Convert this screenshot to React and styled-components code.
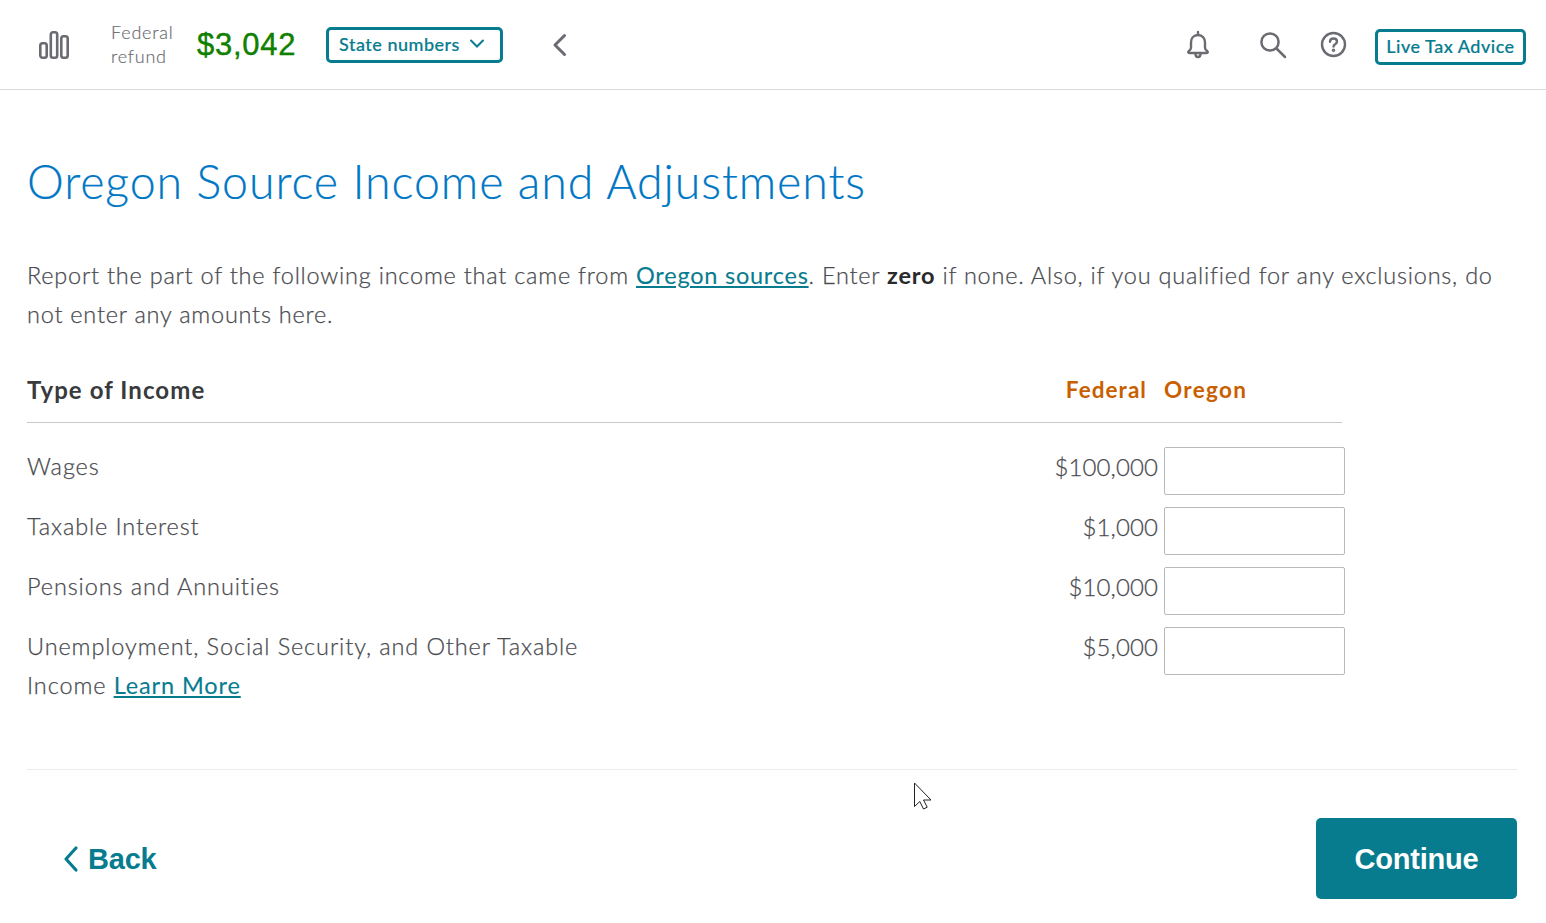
import React from "react";
import styled, { createGlobalStyle } from "styled-components";

const Global = createGlobalStyle`
  html, body { margin: 0; padding: 0; background: #fff; }
  body { font-family: Lato, "Open Sans", sans-serif; color: #393a3d; }
`;
const Page = styled.div`
  width: 1546px; height: 923px; position: relative; overflow: hidden; background: #fff;
  display: flex; flex-direction: column;
`;
const Header = styled.header`
  height: 89px; border-bottom: 1px solid #d9d9d9; display: flex; align-items: center; flex: none;
`;
const IconSlot = styled.span`
  display: flex; align-items: center; justify-content: center; width: ${p => p.$w}px; margin-left: ${p => p.$ml || 0}px; color: #6b6c72;
`;
const RefundLabel = styled.div`
  width: 86px; margin: -2px 0 0 41px; font-size: 18px; line-height: 24px; color: #6b6c72; letter-spacing: .8px; font-weight: 300;
  -webkit-text-stroke: .2px #6b6c72;
`;
const RefundAmount = styled.div`
  font-family: "Liberation Sans", Arial, sans-serif; font-size: 31px; letter-spacing: .75px; color: #108000; width: 129px;
  -webkit-text-stroke: .4px #108000;
`;
const OutlineButton = styled.button`
  box-sizing: border-box; background: #fff; border: 3px solid #077c8f; border-radius: 5px; color: #077c8f;
  font: 500 18px Lato, sans-serif; display: flex; align-items: center; justify-content: center;
  padding: 0 ${p => p.$pr || 0}px ${p => p.$pb || 2}px 0; gap: 9px;
  width: ${p => p.$w}px; height: 36px; margin-left: ${p => p.$ml || 0}px; margin-right: ${p => p.$mr || 0}px; margin-top: ${p => p.$mt || 0}px; letter-spacing: .5px;
  -webkit-text-stroke: .2px #077c8f;
`;
const Spacer = styled.div`flex: 1;`;
const Main = styled.main`
  flex: 1; padding: 0 29px 0 27px; display: flex; flex-direction: column;
`;
const Title = styled.h1`
  margin: 61px 0 0; font-weight: 300; font-size: 46.5px; line-height: 60px; color: #0077c5; letter-spacing: .9px;
  -webkit-text-stroke: .2px #0077c5;
`;
const Intro = styled.p`
  margin: 45px 0 0; font-size: 23.5px; line-height: 39px; color: #4a4b50; letter-spacing: .77px; font-weight: 300;
  -webkit-text-stroke: .25px #4a4b50;
  b { color: #28292c; font-weight: 700; -webkit-text-stroke: 0; }
`;
const TextLink = styled.a`
  color: #077c8f; text-decoration: underline; font-weight: 400; -webkit-text-stroke: .1px #077c8f;
`;
const Table = styled.div`width: 1318px; margin-top: 22px;`;
const HeadRow = styled.div`
  display: grid; grid-template-columns: 1fr 120px 178px; column-gap: 17px; height: 66px; align-items: center; width: 1315px;
  border-bottom: 1px solid #c9c9c9; margin-bottom: 24px;
`;
const HeadLabel = styled.div`font-weight: 700; font-size: 24px; color: #393a3d; letter-spacing: 1.07px;`;
const HeadCol = styled.div`
  font-weight: 700; font-size: 22.5px; color: #c96000; text-align: ${p => p.$right ? "right" : "left"}; letter-spacing: ${p => p.$right ? 1.05 : 1.3}px;
`;
const Row = styled.div`
  display: grid; grid-template-columns: 1fr 181px; column-gap: 6px; margin-bottom: 12px; align-items: start;
`;
const RowLabelCell = styled.div`
  display: grid; grid-template-columns: 580px 1fr; font-size: 23.5px; line-height: 39px; letter-spacing: .89px; color: #4a4b50; font-weight: 300;
  -webkit-text-stroke: .25px #4a4b50;
`;
const Amount = styled.div`text-align: right; font-size: 24px; letter-spacing: .1px;`;
const Field = styled.input`
  box-sizing: border-box; width: 181px; height: 48px; border: 1px solid #bababa; border-radius: 2px; background: #fff; display: block;
`;
const Footer = styled.footer`
  position: absolute; left: 27px; right: 29px; top: 769px; border-top: 1px solid #ececec;
  display: flex; justify-content: space-between; align-items: flex-start; padding-top: 48px;
`;
const BackLink = styled.a`
  display: flex; align-items: center; gap: 8px; margin: 0 0 0 35px; height: 81px; padding-top: 1px; box-sizing: border-box;
  font: 700 29px "Liberation Sans", Arial, sans-serif; color: #077c8f; letter-spacing: -.2px;
`;
const Continue = styled.button`
  width: 201px; height: 81px; border: 0; padding: 1px 0 0; border-radius: 5px; background: #077c8f; color: #fff;
  font: 700 29px "Liberation Sans", Arial, sans-serif; letter-spacing: -.2px;
`;
const Cursor = styled.svg`position: absolute; left: 913px; top: 782px;`;

const rows = [
  ["Wages", "$100,000"],
  ["Taxable Interest", "$1,000"],
  ["Pensions and Annuities", "$10,000"],
  [<>Unemployment, Social Security, and Other Taxable Income <TextLink>Learn More</TextLink></>, "$5,000"],
];

export default function App() {
  return (
    <Page>
      <Global />
      <Header>
        <IconSlot $w={32} $ml={38}>
          <svg width="32" height="30" viewBox="0 0 32 30" fill="none" stroke="currentColor" strokeWidth="2.6">
            <rect x="2.3" y="13.3" width="6.4" height="14.4" rx="2.2" />
            <rect x="12.8" y="2.3" width="6.4" height="25.4" rx="2.2" />
            <rect x="23.3" y="6.3" width="6.4" height="21.4" rx="2.2" />
          </svg>
        </IconSlot>
        <RefundLabel>Federal<br />refund</RefundLabel>
        <RefundAmount>$3,042</RefundAmount>
        <OutlineButton $w={177} $pr={5}>
          State numbers
          <svg width="16" height="10" viewBox="0 0 16 10" fill="none" stroke="currentColor" strokeWidth="2" strokeLinecap="round"><path d="M2 1.5l6 6 6-6" /></svg>
        </OutlineButton>
        <IconSlot $w={18} $ml={48}>
          <svg width="16" height="26" viewBox="0 0 16 26" fill="none" stroke="currentColor" strokeWidth="3" strokeLinecap="round" strokeLinejoin="round"><path d="M12.5 3.5L3 13l9.5 9.5" /></svg>
        </IconSlot>
        <Spacer />
        <IconSlot $w={28}>
          <svg width="26" height="30" viewBox="0 0 26 30" fill="none" stroke="currentColor" strokeWidth="2.4" strokeLinecap="round" strokeLinejoin="round">
            <path d="M13 5c-4.6 0-7 3.4-7 7.5v5.2c0 1.5-1.1 2.6-2.4 3.6-.8.7-.4 1.7.6 1.7h17.6c1 0 1.4-1 .6-1.7-1.3-1-2.4-2.1-2.4-3.6v-5.2C20 8.400 17.600 5 13 5z" />
            <path d="M13 2v3M10.500 24c0 1.800 1.100 3 2.500 3s2.500-1.200 2.500-3" />
          </svg>
        </IconSlot>
        <IconSlot $w={28} $ml={47}>
          <svg width="28" height="28" viewBox="0 0 28 28" fill="none" stroke="currentColor" strokeWidth="2.5" strokeLinecap="round"><circle cx="11" cy="11" r="8.600" /><path d="M17.500 17.500L26 26" /></svg>
        </IconSlot>
        <IconSlot $w={28} $ml={32}>
          <svg width="27" height="27" viewBox="0 0 27 27" fill="none" stroke="currentColor" strokeWidth="2.4" strokeLinecap="round">
            <circle cx="13.500" cy="13.500" r="11.500" />
            <path d="M10 10.800c0-2 1.500-3.300 3.500-3.300s3.500 1.300 3.500 3.100c0 2.700-3.500 2.500-3.500 5" />
            <circle cx="13.500" cy="19.300" r=".6" fill="currentColor" />
          </svg>
        </IconSlot>
        <OutlineButton $w={151} $ml={28} $mt={5} $pb={3} $mr={20}>Live Tax Advice</OutlineButton>
      </Header>
      <Main>
        <Title>Oregon Source Income and Adjustments</Title>
        <Intro>
          Report the part of the following income that came from <TextLink>Oregon sources</TextLink>. Enter <b>zero</b> if none. Also, if you qualified for any exclusions, do not enter any amounts here.
        </Intro>
        <Table>
          <HeadRow>
            <HeadLabel>Type of Income</HeadLabel>
            <HeadCol $right>Federal</HeadCol>
            <HeadCol>Oregon</HeadCol>
          </HeadRow>
          {rows.map(([label, amount], i) => (
            <Row key={i}>
              <RowLabelCell>
                <div>{label}</div>
                <Amount>{amount}</Amount>
              </RowLabelCell>
              <Field />
            </Row>
          ))}
        </Table>
      </Main>
      <Footer>
        <BackLink>
          <svg width="18" height="28" viewBox="0 0 18 28" fill="none" stroke="currentColor" strokeWidth="3.200" strokeLinecap="round" strokeLinejoin="round"><path d="M14 3L4 14l10 11" /></svg>
          Back
        </BackLink>
        <Continue>Continue</Continue>
      </Footer>
      <Cursor width="20" height="28" viewBox="0 0 20 28">
        <path d="M1.500 1v23.500l5.300-5 3.700 7.500 3.700-1.800-3.700-7.200h7.500z" fill="#fff" stroke="#222" strokeWidth="1" />
      </Cursor>
    </Page>
  );
}
